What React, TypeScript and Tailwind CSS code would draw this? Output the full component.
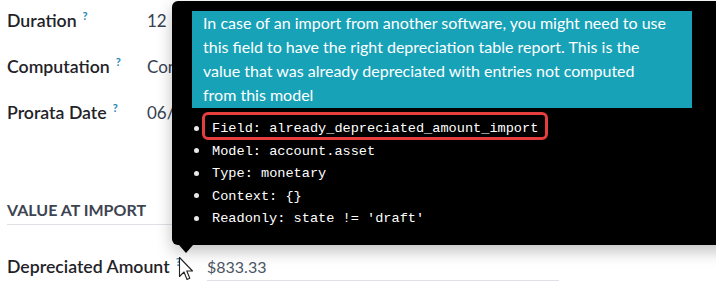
import React from "react";

const sans = { fontFamily: 'Lato, "Noto Sans", sans-serif' };
const mono = { fontFamily: '"Liberation Mono", "DejaVu Sans Mono", monospace' };

function Q() {
  return <span className="relative top-[-7px] ml-[6px] text-[11px] font-bold text-[#1a86b8]">?</span>;
}

function Label({ text }: { text: string }) {
  return (
    <div className="h-[27px] text-[17.7px] font-semibold leading-[27px] text-[#1f2328]">
      <span>{text}</span>
      <Q />
    </div>
  );
}

function Cursor() {
  return (
    <svg width="16" height="26" viewBox="0 0 16 26" className="absolute left-[178px] top-[256px]">
      <path d="M1.5 1.5 L1.5 20.5 L6 16 L9 23.5 L11.8 22.3 L8.8 15 L14.5 15 Z" fill="#fff" stroke="#222" strokeWidth="1.1" strokeLinejoin="round" />
    </svg>
  );
}

export default function App() {
  const items: [string, string][] = [
    ["Field:", "already_depreciated_amount_import"],
    ["Model:", "account.asset"],
    ["Type:", "monetary"],
    ["Context:", "{}"],
    ["Readonly:", "state != 'draft'"],
  ];
  return (
    <div className="relative w-[716px] h-[291px] overflow-hidden bg-white" style={sans}>
      <div className="flex flex-col pl-[7px] pt-[7px]">
        <div className="grid grid-cols-[140px_1fr] gap-y-[19px] text-[17px] leading-[27px]">
          <Label text="Duration" />
          <div className="h-[27px] text-[#374151]">12</div>
          <Label text="Computation" />
          <div className="h-[27px] text-[#374151]">Constant</div>
          <Label text="Prorata Date" />
          <div className="h-[27px] text-[#374151]">06/01/2023</div>
        </div>
        <div className="mt-[73px] w-[300px] border-b border-[#dee2e6] pb-[4px] text-[16px] font-bold leading-[21px] text-[#3d4451]">
          VALUE AT IMPORT
        </div>
        <div className="mt-[29px] flex h-[27px] items-center leading-[26px]">
          <div className="w-[200px] text-[17.7px] font-semibold text-[#1f2328]">
            Depreciated Amount
            <Q />
          </div>
          <div className="w-[352px] border-b border-[#dee2e6] text-[16px] text-[#4b5563]">$833.33</div>
        </div>
      </div>

      <div className="absolute left-[172px] top-[1px] w-[560px] h-[244px] rounded-[6px] bg-black shadow-[0_6px_16px_rgba(0,0,0,0.25)] pt-[10px] pl-[20px]">
        <div className="w-[500px] bg-[#17a2b8] px-[11px] pb-[1px] text-[16px] leading-[24px] text-white">
          In case of an import from another software, you might need to use
          <br />
          this field to have the right depreciation table report. This is the
          <br />
          value that was already depreciated with entries not computed
          <br />
          from this model
        </div>
        <ul className="mt-[10px] text-[13.6px] leading-[22.5px] text-white" style={mono}>
          {items.map(([k, v], i) => (
            <li key={k} className="relative flex items-center">
              <span className="relative top-[-1px] ml-[2px] mr-[13px] h-[5px] w-[5px] rounded-full bg-[#e8e8e8]" />
              <span>
                {k} {v}
              </span>
              {i === 0 && (
                <span className="absolute left-[10px] top-[-6px] h-[28px] w-[346px] rounded-[6px] border-[3px] border-[#e53e3e]" />
              )}
            </li>
          ))}
        </ul>
      </div>
      <div className="absolute left-[179px] top-[245px] h-0 w-0 border-x-[7px] border-t-[8px] border-x-transparent border-t-black" />
      <Cursor />
    </div>
  );
}
